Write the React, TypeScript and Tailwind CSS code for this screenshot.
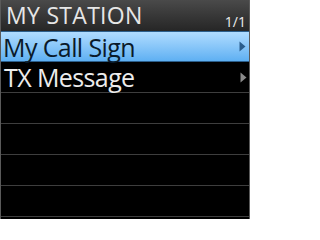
import React from "react";

const Arrow = ({ color }: { color: string }) => (
  <svg width="7" height="11" viewBox="0 0 7 11" className="shrink-0">
    <path d="M0.5 0.5 L6.5 5.5 L0.5 10.5 Z" fill={color} />
  </svg>
);

export default function App() {
  const rows = ["My Call Sign", "TX Message", "", "", "", ""];
  return (
    <div
      className="w-[250px] h-[219px] bg-black overflow-hidden flex flex-col border-x border-[#5a5a5a]"
      style={{ fontFamily: '"Open Sans", "Noto Sans", sans-serif' }}
    >
      <div className="h-[31px] shrink-0 flex items-start justify-between bg-gradient-to-b from-[#4a4a4a] to-[#262626] pl-[5px] pr-[3px]">
        <span className="text-[#e6e6e6] text-[23px] leading-[30px] tracking-[0.3px]">MY STATION</span>
        <span className="text-[#ededed] text-[14px] leading-[14px] mt-[15px]">1/1</span>
      </div>
      {rows.map((r, i) => (
        <div
          key={i}
          className={
            i === 0
              ? "h-[31px] shrink-0 flex items-center justify-between pl-[2px] pr-[3px] bg-gradient-to-b from-[#b0dcff] to-[#5eb0f2] border border-[#2c5f8c] -mx-px"
              : "h-[31px] shrink-0 flex items-center justify-between pl-[3px] pr-[2px] border-b border-[#3e3e3e]"
          }
        >
          <span
            className={
              i === 0
                ? "text-[#0a1a2a] text-[25px] leading-[26px] tracking-[-0.6px]"
                : "text-[#ececec] text-[25px] leading-[26px] tracking-[-0.6px]"
            }
          >
            {r}
          </span>
          {r && <Arrow color={i === 0 ? "#2a5d8c" : "#8a8a8a"} />}
        </div>
      ))}
    </div>
  );
}
